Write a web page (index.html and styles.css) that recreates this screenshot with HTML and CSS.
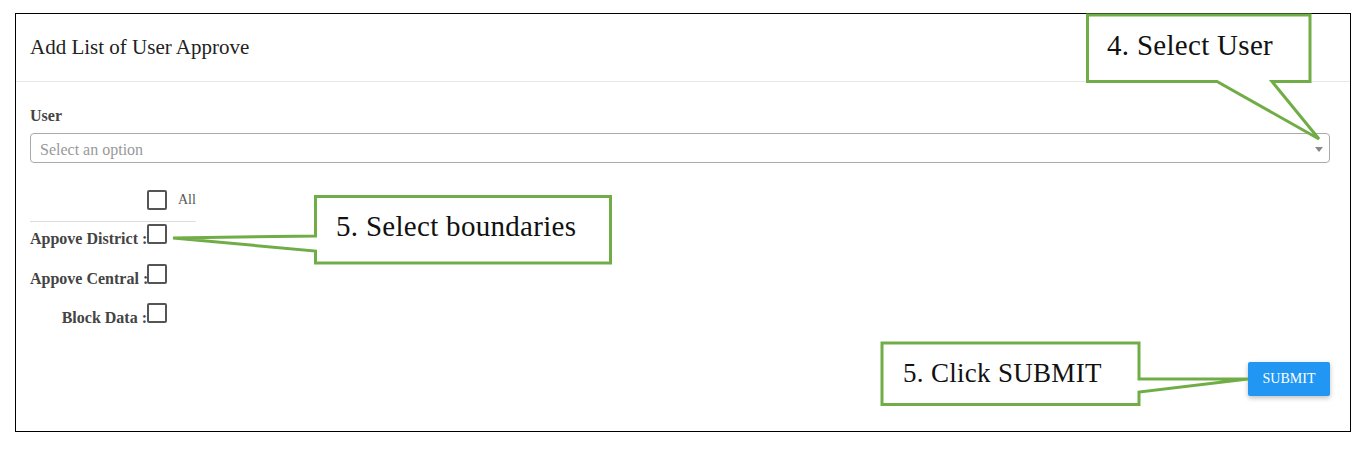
FILE: index.html
```html
<!DOCTYPE html>
<html lang="en">
<head>
    <meta charset="UTF-8">
    <meta name="viewport" content="width=device-width, initial-scale=1.0">
    <title>Add List of User Approve</title>
    <link rel="stylesheet" href="styles.css">
</head>
<body>
    <div class="page">
        <div class="card">
            <div class="card-header">
                <h3>Add List of User Approve</h3>
            </div>
            <div class="card-body">
                <label class="field-label" for="user">User</label>
                <div class="select-box" id="user">
                    <span class="placeholder">Select an option</span>
                    <span class="arrow"></span>
                </div>

                <div class="options">
                    <div class="option-row all-row">
                        <span class="option-label"></span>
                        <input type="checkbox" class="check">
                        <span class="all-text">All</span>
                    </div>
                    <div class="divider"></div>
                    <div class="option-row">
                        <span class="option-label">Appove District :</span>
                        <input type="checkbox" class="check">
                    </div>
                    <div class="option-row">
                        <span class="option-label">Appove Central :</span>
                        <input type="checkbox" class="check">
                    </div>
                    <div class="option-row">
                        <span class="option-label">Block Data :</span>
                        <input type="checkbox" class="check">
                    </div>
                </div>

                <div class="actions">
                    <button type="submit" class="btn-submit">Submit</button>
                </div>
            </div>
        </div>

        <!-- help annotations drawn over the form -->
        <svg class="annotations" width="1369" height="453" viewBox="0 0 1369 453">
            <polygon points="1087.5,15 1310,15 1310,81.5 1272,81.5 1319,139 1217,81.5 1087.5,81.5"/>
            <polygon points="315.5,196.5 610.5,196.5 610.5,263 315.5,263 315.5,251 173,238 315.5,236"/>
            <polygon points="882,343 1139,343 1139,379 1248,379 1139,392 1139,404.5 882,404.5"/>
        </svg>
        <div class="note note-user">4. Select User</div>
        <div class="note note-bounds">5. Select boundaries</div>
        <div class="note note-submit">5. Click SUBMIT</div>
    </div>
</body>
</html>
```

FILE: styles.css
```css
body {
    margin: 0;
    padding: 0;
    background: #fff;
    font-family: "Liberation Serif", "Times New Roman", serif;
    color: #444;
}
.page {
    position: relative;
    width: 1369px;
    height: 453px;
    padding: 13px 0 0 15px;
    box-sizing: border-box;
}
.card {
    width: 1336px;
    border: 1px solid #000;
    box-sizing: border-box;
    background: #fff;
}
.card-header {
    height: 67px;
    display: flex;
    align-items: center;
    padding: 0 14px;
    border-bottom: 1px solid #e8e8e8;
}
.card-header h3 {
    margin: 0;
    font-size: 21px;
    font-weight: normal;
    line-height: 1;
    color: #222;
}
.card-body {
    padding: 26px 20px 35px 14px;
}
.field-label {
    display: block;
    font-size: 16px;
    font-weight: bold;
    line-height: 16px;
    color: #444;
    margin-bottom: 9px;
}
.select-box {
    height: 30px;
    border: 1px solid #aaa;
    border-radius: 4px;
    box-sizing: border-box;
    display: flex;
    align-items: center;
    justify-content: space-between;
    padding: 0 6px 0 9px;
}
.placeholder {
    font-size: 16px;
    color: #999;
    margin-top: 3px;
}
.arrow {
    width: 0;
    height: 0;
    border-top: 5px solid #888;
    border-left: 4px solid transparent;
    border-right: 4px solid transparent;
    margin-top: 2px;
}
.options {
    margin-top: 27px;
    display: flex;
    flex-direction: column;
}
.option-row {
    display: flex;
    align-items: flex-end;
    height: 20px;
    margin-bottom: 19.5px;
}
.option-row:last-child {
    margin-bottom: 0;
}
.all-row {
    margin-bottom: 11px;
    align-items: center;
}
.option-label {
    width: 117px;
    text-align: right;
    font-size: 16px;
    font-weight: bold;
    line-height: 16px;
    margin-bottom: -3px;
    color: #444;
    white-space: nowrap;
}
.all-row .option-label {
    margin-bottom: 0;
}
.check {
    appearance: none;
    -webkit-appearance: none;
    width: 20px;
    height: 20px;
    margin: 0;
    border: 2px solid #555;
    border-radius: 2px;
    box-sizing: border-box;
    background: #fff;
}
.all-text {
    margin-left: 11px;
    font-size: 14px;
    color: #555;
}
.divider {
    width: 166px;
    height: 1px;
    background: #ddd;
    margin-bottom: 2px;
}
.actions {
    display: flex;
    justify-content: flex-end;
    margin-top: 39px;
}
.btn-submit {
    width: 82px;
    height: 34px;
    border: none;
    border-radius: 2px;
    background-color: #2196f3;
    color: #fff;
    font-family: "Liberation Serif", "Times New Roman", serif;
    font-size: 14px;
    text-transform: uppercase;
    box-shadow: 0 2px 5px rgba(0, 0, 0, 0.26);
    cursor: pointer;
}
.annotations {
    position: absolute;
    top: 0;
    left: 0;
    pointer-events: none;
}
.annotations polygon {
    fill: #fff;
    stroke: #70ad47;
    stroke-width: 3;
}
.note {
    position: absolute;
    font-family: "Liberation Serif", "Times New Roman", serif;
    font-size: 29px;
    line-height: 29px;
    letter-spacing: 0.3px;
    color: #111;
    white-space: nowrap;
}
.note-user {
    left: 1107px;
    top: 31px;
}
.note-bounds {
    left: 336px;
    top: 212px;
}
.note-submit {
    left: 903px;
    top: 360px;
    font-size: 27px;
    line-height: 27px;
}
```
